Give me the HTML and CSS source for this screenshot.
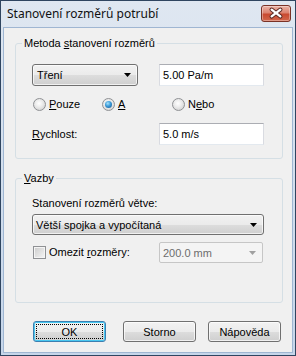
FILE: index.html
```html
<!DOCTYPE html>
<html lang="cs">
<head>
  <meta charset="UTF-8" />
  <title>Stanovení rozměrů potrubí</title>
  <link rel="stylesheet" href="styles.css">
</head>
<body>

  <div class="window">
    <div class="titlebar">
      <span class="title">Stanovení rozměrů potrubí</span>
      <button class="close-btn" aria-label="Zavřít">
        <svg width="29" height="15" viewBox="0 0 29 15">
          <path d="M10 3.5 L19 10.5 M19 3.5 L10 10.5" stroke="#5b2a24" stroke-width="4.4" stroke-linecap="round" fill="none"/>
          <path d="M10 3.5 L19 10.5 M19 3.5 L10 10.5" stroke="#fff" stroke-width="2.4" stroke-linecap="round" fill="none"/>
        </svg>
      </button>
    </div>

    <div class="client">

      <!-- Metoda -->
      <div class="group group-method">
        <div class="group-title">Metoda <u>s</u>tanovení rozměrů</div>
        <div class="grid-row first-row">
          <div class="combo">
            <span>Tření</span>
            <svg class="arrow" width="7" height="4" viewBox="0 0 7 4"><path d="M0 0 H7 L3.5 4 Z" fill="#000"/></svg>
          </div>
          <div class="edit">5.00 Pa/m</div>
        </div>
        <div class="radios">
          <label class="radio"><span class="radio-box"></span><span><u>P</u>ouze</span></label>
          <label class="radio"><span class="radio-box checked"></span><span><u>A</u></span></label>
          <label class="radio"><span class="radio-box"></span><span>N<u>e</u>bo</span></label>
        </div>
        <div class="grid-row speed-row">
          <span><u>R</u>ychlost:</span>
          <div class="edit">5.0 m/s</div>
        </div>
      </div>

      <!-- Vazby -->
      <div class="group group-links">
        <div class="group-title"><u>V</u>azby</div>
        <div class="field-label">Stanovení rozměrů větve:</div>
        <div class="combo combo-wide">
          <span>Větší spojka a vypočítaná</span>
          <svg class="arrow" width="7" height="4" viewBox="0 0 7 4"><path d="M0 0 H7 L3.5 4 Z" fill="#000"/></svg>
        </div>
        <div class="grid-row limit-row">
          <label class="check"><span class="check-box"></span><span>Omezit <u>r</u>ozměry:</span></label>
          <div class="combo-disabled">
            <span>200.0 mm</span>
            <svg class="arrow" width="7" height="4" viewBox="0 0 7 4"><path d="M0 0 H7 L3.5 4 Z" fill="#a0a0a0"/></svg>
          </div>
        </div>
      </div>

      <div class="buttons">
        <button class="btn btn-default"><span class="focus">OK</span></button>
        <button class="btn btn-cancel">Storno</button>
        <button class="btn btn-help">Nápověda</button>
      </div>

    </div>
  </div>

</body>
</html>
```

FILE: styles.css
```css
body {
  margin: 0;
  background-color: #fff;
}

.window {
  width: 296px;
  height: 356px;
  box-sizing: border-box;
  border: 1px solid #2f4560;
  background: linear-gradient(#dfe7f1, #c6d6ea);
  padding: 0 3px 3px 3px;
  display: flex;
  flex-direction: column;
  font-family: "Liberation Sans", Arial, sans-serif;
  font-size: 11px;
  color: #000;
}

.titlebar {
  height: 27px;
  display: flex;
  justify-content: space-between;
  align-items: flex-start;
}

.title {
  font-family: "Noto Sans", "Liberation Sans", sans-serif;
  font-size: 12px;
  line-height: 16px;
  margin: 5px 0 0 3px;
  color: #111;
}

.close-btn {
  width: 30px;
  height: 17px;
  margin: 4px 1px 0 0;
  padding: 0;
  border: 1px solid #7a3226;
  border-radius: 3px;
  background: linear-gradient(#eab3a6 0%, #dc8370 45%, #c94a30 55%, #d2674c 100%);
  box-shadow: inset 0 0 0 1px rgba(255, 255, 255, 0.35);
  display: flex;
  align-items: center;
  justify-content: center;
}

.close-btn svg {
  display: block;
}

.client {
  flex: 1;
  background-color: #f0f0f0;
  box-shadow: 0 0 0 1px #9fb6d2;
  padding: 15px 9px 0 11px;
}

/* Group boxes */
.group {
  border: 1px solid #d5dfe5;
  border-radius: 3px;
  padding: 0 16px 13px 16px;
}

.group-links {
  margin-top: 19px;
  padding-bottom: 39px;
}

.group-title {
  width: fit-content;
  margin: -7px 0 0 -10px;
  padding: 0 2px;
  line-height: 13px;
  background-color: #f0f0f0;
}

.grid-row {
  display: grid;
  grid-template-columns: 127px 105px;
  align-items: center;
}

.first-row {
  margin-top: 14px;
}

.speed-row {
  margin-top: 12px;
}

/* Combo boxes */
.combo {
  width: 106px;
  height: 22px;
  box-sizing: border-box;
  border: 1px solid #707070;
  border-radius: 3px;
  background: linear-gradient(#f2f2f2 0%, #ebebeb 50%, #dddddd 51%, #cfcfcf 100%);
  box-shadow: inset 0 0 0 1px rgba(255, 255, 255, 0.7);
  display: flex;
  justify-content: space-between;
  align-items: center;
  padding: 0 6px 0 4px;
}

.combo-wide {
  width: 232px;
  height: 21px;
  margin-top: 4px;
  padding-left: 3px;
}

.arrow {
  display: block;
}

.combo-disabled {
  width: 104px;
  height: 21px;
  box-sizing: border-box;
  border: 1px solid #c6c6c6;
  border-radius: 2px;
  background-color: #f4f4f4;
  color: #6d6d6d;
  display: flex;
  justify-content: space-between;
  align-items: center;
  padding: 0 6px 0 3px;
}

/* Edit boxes */
.edit {
  height: 22px;
  box-sizing: border-box;
  border: 1px solid #d9dbe1;
  border-top-color: #abadb3;
  border-bottom-color: #e3e9ef;
  background-color: #fff;
  padding: 0 3px;
  line-height: 20px;
}

/* Radio buttons */
.radios {
  margin-top: 12px;
  height: 13px;
  display: grid;
  grid-template-columns: 69px 70px auto;
}

.radio,
.check {
  display: flex;
  align-items: center;
  line-height: 13px;
}

.radio-box {
  width: 13px;
  height: 13px;
  box-sizing: border-box;
  border: 1px solid #8f9194;
  border-radius: 50%;
  background: radial-gradient(circle at 45% 40%, #ffffff 0%, #ececec 40%, #c8c8c8 100%);
  margin: 0 3px 0 1px;
  display: flex;
  align-items: center;
  justify-content: center;
}

.radio-box.checked::after {
  content: "";
  width: 7px;
  height: 7px;
  border-radius: 50%;
  background: radial-gradient(circle at 40% 35%, #a6e2fb 0%, #3a9ad8 45%, #1b4f86 100%);
}

.field-label {
  margin-top: 12px;
  line-height: 13px;
}

.limit-row {
  margin-top: 7px;
}

.check-box {
  width: 13px;
  height: 13px;
  box-sizing: border-box;
  border: 1px solid #8f9194;
  background: linear-gradient(135deg, #cbcbcb, #f6f6f6);
  box-shadow: inset 0 0 0 1px #f4f4f4;
  margin: 0 3px 0 1px;
}

/* Dialog buttons */
.buttons {
  margin-top: 18px;
  display: flex;
}

.btn {
  width: 73px;
  height: 21px;
  padding: 0;
  border: 1px solid #707070;
  border-radius: 3px;
  background: linear-gradient(#f2f2f2 0%, #ebebeb 50%, #dddddd 51%, #cfcfcf 100%);
  box-shadow: inset 0 0 0 1px rgba(255, 255, 255, 0.7);
  font-family: "Liberation Sans", Arial, sans-serif;
  font-size: 11px;
  color: #000;
}

.btn-default {
  margin-left: 18px;
  border-color: #3c7fb1;
  box-shadow: inset 0 0 0 1px #48c7f0;
  display: flex;
  align-items: stretch;
}

.focus {
  flex: 1;
  margin: 2px;
  border: 1px dotted #000;
  display: flex;
  align-items: center;
  justify-content: center;
}

.btn-cancel {
  margin-left: 17px;
}

.btn-help {
  margin-left: 12px;
}
```
